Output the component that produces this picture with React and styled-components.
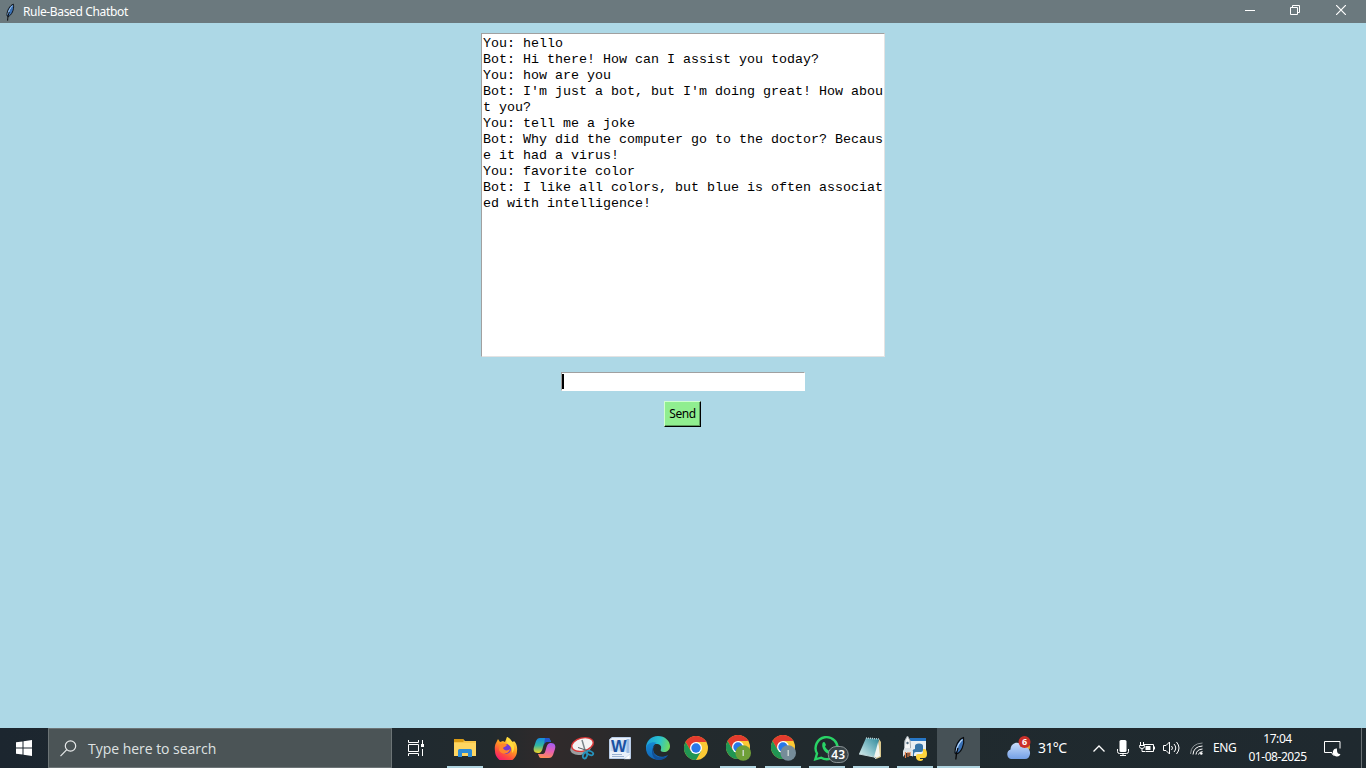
import React from 'react';
import styled, { createGlobalStyle, css } from 'styled-components';

const Global = createGlobalStyle`
  html, body { margin: 0; padding: 0; overflow: hidden; }
  * { box-sizing: border-box; }
  svg { display: block; flex: none; }
`;

const Screen = styled.div`
  width: 1366px;
  height: 768px;
  display: flex;
  flex-direction: column;
  background: #add8e6;
  font-family: 'Open Sans', 'Noto Sans', sans-serif;
`;

const TitleBar = styled.header`
  height: 23px;
  display: flex;
  align-items: center;
  padding-right: 2px;
  background: #6b797e;
  color: #fff;
`;
const TitleIcon = styled.div`
  width: 23px;
  padding-left: 4px;
`;
const Title = styled.span`
  flex: 1;
  font-family: 'Noto Sans', sans-serif;
  font-size: 12px;
  line-height: 22px;
  letter-spacing: -0.35px;
`;
const Control = styled.div`
  width: ${(p) => p.$w || 46}px;
  height: 23px;
  display: flex;
  justify-content: center;
  padding-top: 5px;
`;

const Client = styled.main`
  flex: 1;
  display: flex;
  flex-direction: column;
  align-items: center;
  padding-top: 10px;
`;
const ChatLog = styled.div`
  width: 404px;
  height: 324px;
  padding: 2px 1px 1px;
  background: #fff;
  border: 1px solid;
  border-color: #a0a0a0 #e3e3e3 #e3e3e3 #a0a0a0;
  font: 13.33px/16px 'Liberation Mono', monospace;
  color: #000;
`;
const Line = styled.div`
  height: 16px;
  white-space: pre;
`;
const Entry = styled.div`
  width: 244px;
  height: 19px;
  margin-top: 15px;
  padding: 1px 0;
  background: #fff;
  border: 1px solid;
  border-color: #a0a0a0 #fff #fff #a0a0a0;
`;
const Caret = styled.div`
  width: 2px;
  height: 15px;
  background: #000;
`;
const SendButton = styled.button`
  width: 37px;
  height: 26px;
  margin: 10px 0 0 -1px;
  padding: 0;
  background: #90ee90;
  border: 1px solid;
  border-color: #d0ffd0 #000 #000 #d0ffd0;
  box-shadow: inset -1px -1px 0 #5c9c5c;
  color: #000;
  font: 12px/20px 'Noto Sans', sans-serif;
  letter-spacing: -0.4px;
`;

const Taskbar = styled.footer`
  height: 40px;
  display: flex;
  background: linear-gradient(90deg, #1c262f 0, #202a30 30%, #222a2d 36%, #302a2b 40%, #2c2a2b 44%, #232a2d 49%, #202a2e 64%, #1f292f 100%);
  color: #fff;
`;
const Start = styled.div`
  width: 48px;
  display: flex;
  align-items: center;
  justify-content: center;
`;
const Search = styled.div`
  width: 344px;
  display: flex;
  align-items: center;
  padding-left: 11px;
  background: #4b5456;
  border: 1px solid #6c7476;
  color: #dfe2e2;
  font-size: 14px;
  letter-spacing: -0.03px;
`;
const SearchText = styled.span`
  margin-left: 11px;
  padding-top: 1px;
`;
const Slot = styled.div`
  width: ${(p) => p.$w || 38}px;
  margin-left: ${(p) => p.$gap || 0}px;
  height: 40px;
  position: relative;
  display: flex;
  align-items: center;
  justify-content: center;
  background: ${(p) => (p.$active ? '#465156' : 'transparent')};
  ${(p) =>
    p.$open &&
    css`
      &::after {
        content: '';
        position: absolute;
        left: ${p.$active ? 0 : 1}px;
        right: ${p.$active ? 0 : 1}px;
        bottom: 0;
        height: 2px;
        background: #b0d4e0;
      }
    `}
`;
const Tray = styled.div`
  margin-left: 24px;
  display: flex;
  align-items: center;
`;
const TrayItem = styled.div`
  width: ${(p) => p.$w}px;
  display: flex;
  justify-content: center;
`;
const TrayText = styled.div`
  width: ${(p) => p.$w}px;
  padding-left: ${(p) => p.$indent || 0}px;
  font-family: 'Noto Sans', sans-serif;
  font-size: ${(p) => p.$size || 12}px;
  letter-spacing: ${(p) => p.$track || 0}px;
  line-height: 20px;
  white-space: nowrap;
`;
const Clock = styled.div`
  width: 70px;
  height: 40px;
  padding: 2px 0 0 1px;
  font: 12px/18px 'Noto Sans', sans-serif;
  letter-spacing: -0.45px;
  text-align: center;
  white-space: nowrap;
`;
const ShowDesktop = styled.div`
  width: 5px;
  height: 40px;
  margin-left: auto;
  border-left: 1px solid #6a7175;
`;

const Feather = ({ w, h }) => (
  <svg width={w} height={h} viewBox="0 0 14 24">
    <path d="M11.500 1.500C7 3 2.500 10 3 17l1.500 1C9 16.500 13 9 11.500 1.500z" fill="#3970b5" stroke="#0b0d10" strokeWidth="1.200" />
    <path d="M10.500 3.500C7 6.500 5 11 4.200 15.500" fill="none" stroke="#b9d8f8" strokeWidth="1.200" />
    <path d="M6 12C4.800 15 4 19 3.800 23.500" fill="none" stroke="#08090b" strokeWidth="1.300" />
  </svg>
);

const Folder = () => (
  <svg width="22" height="20" viewBox="0 0 22 20">
    <path d="M0 1h9l2 2h11v15H0z" fill="#f9c74a" />
    <path d="M0 1h9l1 2-1 1H0z" fill="#d99a13" />
    <path d="M0 5h22v13H0z" fill="#ffd661" />
    <path d="M4 19v-6.500Q4 11 5.500 11h11q1.500 0 1.500 1.500V19h-4v-4H8v4z" fill="#2d8cd6" />
    <path d="M8 15h6v3H8z" fill="#ffd661" />
  </svg>
);

const Firefox = () => (
  <svg width="24" height="24" viewBox="0 0 24 24">
    <defs>
      <linearGradient id="fx" x1=".8" y1="0" x2=".25" y2="1">
        <stop offset="0" stopColor="#fff44f" />
        <stop offset=".4" stopColor="#ffa01f" />
        <stop offset=".7" stopColor="#ff4f3d" />
        <stop offset="1" stopColor="#f5107a" />
      </linearGradient>
    </defs>
    <path d="M2 7l2-4 2 3 3-1 2 1 2-5c4 2 4 4 6 5l1-1c3 3 3.500 7 3 10a11 11 0 0 1-22 0C.5 12 .8 9 2 7z" fill="url(#fx)" />
    <circle cx="12" cy="13" r="5" fill="#7139d4" />
    <path d="M6 9c2-2 5-2 7 0-1 2-3 1.500-4 3 1 3 5 3 7 1-1 5-8 7-11 1z" fill="#ff862b" />
    <path d="M13 1c4 2 4 4 6 7 2 3 1 7-1 9 1-6-2-7-5-10-1-2 0-4 0-6z" fill="#ffdb3d" />
  </svg>
);

const Copilot = () => (
  <svg width="23" height="22" viewBox="0 0 23 22">
    <defs>
      <linearGradient id="cpa" x1=".3" y1="0" x2=".3" y2="1">
        <stop offset="0" stopColor="#158be0" />
        <stop offset=".5" stopColor="#33b7a0" />
        <stop offset="1" stopColor="#f6d525" />
      </linearGradient>
      <linearGradient id="cpb" x1=".6" y1="0" x2=".4" y2="1">
        <stop offset="0" stopColor="#a45cf3" />
        <stop offset=".5" stopColor="#e65fb3" />
        <stop offset="1" stopColor="#ff8b55" />
      </linearGradient>
    </defs>
    <path d="M7 1h8c2 0 2 2 3 4h-4c-3 0-3 2-4 5-1 4-2 6-5 6-4 0-5-3-4-6L3 4c1-2 2-3 4-3z" fill="url(#cpa)" />
    <path d="M12 1h3c2 0 2 2 3 4h-4c-2 0-2 1-3 3z" fill="#2454cf" />
    <path d="M16 21H8c-2 0-2-2-3-4h4c3 0 3-2 4-5 1-4 2-6 5-6 4 0 5 3 4 6l-2 6c-1 2-2 3-4 3z" fill="url(#cpb)" />
  </svg>
);

const Snip = () => (
  <svg width="25" height="24" viewBox="0 0 25 24">
    <ellipse cx="11" cy="11.500" rx="11" ry="7" fill="#9a9ea0" transform="rotate(-18 11 11.500)" />
    <ellipse cx="12.500" cy="8.500" rx="11" ry="6.500" fill="#f3f3f3" stroke="#db3737" strokeWidth="1.400" transform="rotate(-14 12.500 8.500)" />
    <path d="M12 4l3.500 12" stroke="#7b8589" strokeWidth="1.500" fill="none" />
    <path d="M8 11.500l9 3" stroke="#555e62" fill="none" />
    <ellipse cx="15" cy="19.500" rx="2" ry="3" fill="none" stroke="#2793bd" strokeWidth="1.800" transform="rotate(18 15 19.500)" />
    <ellipse cx="20" cy="17" rx="3.400" ry="1.900" fill="none" stroke="#2793bd" strokeWidth="1.800" transform="rotate(22 20 17)" />
  </svg>
);

const Word = () => (
  <svg width="23" height="23" viewBox="0 0 23 23">
    <path d="M.5 2.500L3 .5h18.500v21H.5z" fill="#e9f0fa" stroke="#b9cde8" />
    <path d="M1.500 4L18 3v12L1.500 14z" fill="#c9dbf1" />
    <path d="M17.500 2h3v14h-3z" fill="#9dbbe2" />
    <text x="2" y="15" fontFamily="Liberation Sans" fontWeight="700" fontSize="16.500" fill="#1a51a2">W</text>
    <path d="M3 17.500h10M3 19.500h12" stroke="#9ab2d2" />
    <path d="M15 22l6-5v5z" fill="#fff" stroke="#b5c9e4" strokeWidth=".5" />
  </svg>
);

const Edge = () => (
  <svg width="24" height="24" viewBox="0 0 24 24">
    <defs>
      <linearGradient id="edt" x1="0" y1=".3" x2="1" y2=".5">
        <stop offset="0" stopColor="#1ba0dc" />
        <stop offset=".55" stopColor="#2bc3cd" />
        <stop offset="1" stopColor="#70db5d" />
      </linearGradient>
      <linearGradient id="edb" x1="0" y1="0" x2="0" y2="1">
        <stop offset="0" stopColor="#1589d4" />
        <stop offset="1" stopColor="#1264b5" />
      </linearGradient>
    </defs>
    <path d="M0 12C0 5 5 0 12 0s12 5 12 10c0 4-3 6-6 6-3 0-4-1-3-3 .8-3-1-5-5-5-5 0-9 3-10 7z" fill="url(#edt)" />
    <path d="M0 12c1-5 7-7 11-5-4 1-5 6-3 10 3 4 9 5 14 2-5 8-22 6-22-7z" fill="url(#edb)" />
    <path d="M10 9c-5 3-3 10 2 12 4 1 8 0 10-2-2 4-6 5-10 5C5 23 4 11 10 9z" fill="#124f98" />
  </svg>
);

const Chrome = ({ badge }) => (
  <svg width={badge ? 25 : 24} height={badge ? 26 : 24} viewBox={badge ? '0 0 25 26' : '0 0 24 24'}>
    <circle cx="12" cy="12" r="12" fill="#fcc934" />
    <path d="M1.600 6A12 12 0 0 1 22.400 6H12v6L6.800 15z" fill="#e33b2e" />
    <path d="M1.600 6A12 12 0 0 0 12 24l5.200-9L12 12l-5.200 3z" fill="#219653" />
    <circle cx="12" cy="12" r="6" fill="#fff" />
    <circle cx="12" cy="12" r="4.700" fill="#2878e8" />
    {badge && (
      <>
        <circle cx="17.200" cy="18" r="7.800" fill={badge} />
        <path d="M17.200 15v6" stroke="#d5ddd9" strokeWidth="1.300" />
      </>
    )}
  </svg>
);

const WhatsAppIcon = styled.div`
  padding-left: 7px;
`;
const WhatsApp = () => (
  <WhatsAppIcon>
    <svg width="36" height="30" viewBox="0 0 36 30">
      <path d="M2.300 26.300L4 20.500a11 11 0 1 1 4.200 4.200z" fill="none" stroke="#29d366" strokeWidth="2.400" />
      <path d="M9.500 10c1-1.500 2-1.500 2.600 0l.9 2-1 1.500c1.200 2.300 2.500 3.500 4.800 4.500l1.500-1.500 2.700 1.500c.5 2-1.500 3.500-3.500 3.300C12 20.500 8 15 9.500 10z" fill="#29d366" />
      <rect x="15.200" y="13.500" width="20" height="16" rx="8" fill="#3a4549" stroke="#8a9396" />
      <text x="25.200" y="26.200" textAnchor="middle" fontFamily="Noto Sans" fontSize="12" fontWeight="600" fill="#fff">43</text>
    </svg>
  </WhatsAppIcon>
);

const Notepad = () => (
  <svg width="24" height="24" viewBox="0 0 24 24">
    <defs>
      <linearGradient id="np" x1="1" y1="0" x2="0" y2="1">
        <stop offset="0" stopColor="#2e8798" />
        <stop offset=".5" stopColor="#83bec8" />
        <stop offset="1" stopColor="#e0f0ef" />
      </linearGradient>
    </defs>
    <path d="M20 3l2 3v15l-5 2z" fill="#d9c78c" />
    <path d="M19 3l2 17-4 2-3-2z" fill="#f2f4ef" />
    <path d="M7 2l13 1-5 18L0 18z" fill="url(#np)" />
    <path d="M7 2l13 1" stroke="#bcd4d8" strokeWidth="1.400" strokeDasharray="1 1" />
    <path d="M0 18l15 3 2 2" stroke="#bed4d7" fill="none" />
  </svg>
);

const Idle = () => (
  <svg width="24" height="25" viewBox="0 0 24 25">
    <path d="M7 2h16v18H7z" fill="#e9eff3" />
    <path d="M7 2h16v3H7z" fill="#2777c6" />
    <path d="M12 12v-3q0-2.500 4-2.500t4 2.500v4q0 2-2 2h-5q-2 0-2 2v2H9q-1-7 3-7h5z" fill="#3775a9" transform="translate(0 1)" />
    <path d="M20 13h2q2 1 2 5t-3 4h-4v1h3v1q-2 1.500-5 .5-2-.5-2-3.500v-1q0-2 2-2h3q2 0 2-2z" fill="#ffd43b" />
    <path d="M4.500 0Q8 4 7.500 10v6h-6v-6Q1 4 4.500 0z" fill="#f6f6f6" stroke="#a3acb2" />
    <circle cx="4.500" cy="7" r="1.200" fill="#536d80" />
    <path d="M1.500 12L0 15v6l3-4h4l3 4v-6l-2.500-3" fill="#dde3e7" />
    <path d="M2.500 16v6M5 16v5M7 16v4" stroke="#e47b45" strokeWidth="1.200" />
  </svg>
);

const Weather = () => (
  <svg width="25" height="25" viewBox="0 0 25 25">
    <defs>
      <linearGradient id="cl" x1="0" y1="0" x2="0" y2="1">
        <stop offset="0" stopColor="#c9ddfa" />
        <stop offset="1" stopColor="#739fe6" />
      </linearGradient>
    </defs>
    <circle cx="19" cy="11" r="5" fill="#eda531" />
    <path d="M5 23a5 5 0 0 1-.5-9.500C5 5 15 5 17 11c5-.5 7.500 3 7 7-.5 3-2 5-5 5z" fill="url(#cl)" />
    <circle cx="18.500" cy="6" r="6" fill="#cb302a" />
    <text x="18.500" y="9.300" textAnchor="middle" fontFamily="Noto Sans" fontWeight="700" fontSize="9" fill="#fff">6</text>
  </svg>
);

const outline = { fill: 'none', stroke: '#fff' };

const lines = [
  'You: hello',
  'Bot: Hi there! How can I assist you today?',
  'You: how are you',
  "Bot: I'm just a bot, but I'm doing great! How abou",
  't you?',
  'You: tell me a joke',
  'Bot: Why did the computer go to the doctor? Becaus',
  'e it had a virus!',
  'You: favorite color',
  'Bot: I like all colors, but blue is often associat',
  'ed with intelligence!',
];

export default function App() {
  return (
    <Screen>
      <Global />
      <TitleBar>
        <TitleIcon><Feather w={12} h={18} /></TitleIcon>
        <Title>Rule-Based Chatbot</Title>
        <Control $w={44}>
          <svg width="10" height="11" {...outline}><path d="M0 5.500h10" /></svg>
        </Control>
        <Control>
          <svg width="10" height="10" {...outline}><path d="M.5 2.500h7v7h-7zM2.500 2V.5h7v7H8" /></svg>
        </Control>
        <Control>
          <svg width="10" height="10" {...outline}><path d="M0 0l10 10M10 0L0 10" strokeWidth="1.200" /></svg>
        </Control>
      </TitleBar>

      <Client>
        <ChatLog>{lines.map((l) => <Line key={l}>{l}</Line>)}</ChatLog>
        <Entry><Caret /></Entry>
        <SendButton>Send</SendButton>
      </Client>

      <Taskbar>
        <Start>
          <svg width="16" height="16" viewBox="0 0 16 16" fill="#fff">
            <path d="M0 2.300L6.500 1.400V7.500H0zM7.500 1.200L16 0v7.500H7.500zM0 8.500h6.500v6.100L0 13.700zM7.500 8.500H16V16l-8.500-1.200z" />
          </svg>
        </Start>
        <Search>
          <svg width="17" height="17" viewBox="0 0 17 17" fill="none" stroke="#e8eaea" strokeWidth="1.200">
            <circle cx="10.500" cy="6" r="5.200" />
            <path d="M6.800 9.700L.5 16.200" />
          </svg>
          <SearchText>Type here to search</SearchText>
        </Search>
        <Slot $w={48}>
          <svg width="16" height="16" viewBox="0 0 16 16" {...outline}>
            <path d="M.5 0v2.500h10V0M.5 4.500h10v7H.5zM.5 16v-2.500h10V16M14.500 0v4M14.500 9v7" />
            <path d="M13 4h3v3h-3z" fill="#fff" stroke="none" />
          </svg>
        </Slot>
        <Slot $gap={6} $open><Folder /></Slot>
        <Slot $gap={3}><Firefox /></Slot>
        <Slot><Copilot /></Slot>
        <Slot><Snip /></Slot>
        <Slot><Word /></Slot>
        <Slot><Edge /></Slot>
        <Slot><Chrome /></Slot>
        <Slot $gap={4} $open><Chrome badge="#6f9f38" /></Slot>
        <Slot $gap={7} $open><Chrome badge="#758c99" /></Slot>
        <Slot $gap={6} $open><WhatsApp /></Slot>
        <Slot $gap={6} $open><Notepad /></Slot>
        <Slot $gap={6} $open><Idle /></Slot>
        <Slot $gap={3} $w={43} $open $active><Feather w={14} h={24} /></Slot>
        <Tray>
          <TrayItem $w={28}><Weather /></TrayItem>
          <TrayText $w={54} $indent={6} $size={14} $track={-0.6}>31°C</TrayText>
          <TrayItem $w={26}>
            <svg width="12" height="7" viewBox="0 0 12 7" {...outline}><path d="M.5 6.500L6 1l5.500 5.500" strokeWidth="1.300" /></svg>
          </TrayItem>
          <TrayItem $w={21}>
            <svg width="12" height="16" viewBox="0 0 12 16" {...outline}>
              <rect x="2.500" y="0" width="7" height="12" rx="1.500" fill="#fff" stroke="none" />
              <path d="M.5 9v2.500q0 2 2 2h7q2 0 2-2V9M6 13v2.500M3 15.500h6" />
            </svg>
          </TrayItem>
          <TrayItem $w={28}>
            <svg width="16" height="12" viewBox="0 0 16 12" {...outline}>
              <path d="M5 2.500h9.500v7h-8M15.500 4.500v3M1.500 0v3M4.500 0v3M.5 3.500h5v1q0 2-2.500 2t-2.500-2zM3 6.500v3h3" />
              <path d="M6.500 4h5v4h-5z" fill="#fff" stroke="none" />
            </svg>
          </TrayItem>
          <TrayItem $w={20}>
            <svg width="17" height="14" viewBox="0 0 17 14" {...outline}>
              <path d="M.5 4.500h2.500L6.500 1v12L3 9.500H.5zM8.500 5q2 2 0 4M11 3q3.500 4 0 8M13.500 1q5 6 0 12" />
            </svg>
          </TrayItem>
          <TrayItem $w={30}>
            <svg width="13" height="13" viewBox="0 0 13 13" {...outline}>
              <path d="M.5 12Q1 1.500 12.500 1" stroke="#8d9497" />
              <path d="M3 12.500Q3.500 4.500 12.500 4M6 12.500Q6.500 7.500 12.500 7M8.500 12.500q.5-2.500 4-3" />
              <circle cx="11.300" cy="11.500" r="1.300" fill="#fff" stroke="none" />
            </svg>
          </TrayItem>
          <TrayText $w={31} $indent={2} $track={-0.45}>ENG</TrayText>
          <Clock>17:04<br />01-08-2025</Clock>
          <TrayItem $w={41}>
            <svg width="17" height="17" viewBox="0 0 17 17" {...outline}>
              <path d="M8 12.500H5M.5 1.500h15.500v7M.5 1.500v11h7l2 3" />
              <path d="M13 8.500a4 4 0 1 0 3.500 5.500q-4 .5-3.500-5.500z" fill="#fff" stroke="none" />
            </svg>
          </TrayItem>
        </Tray>
        <ShowDesktop />
      </Taskbar>
    </Screen>
  );
}
